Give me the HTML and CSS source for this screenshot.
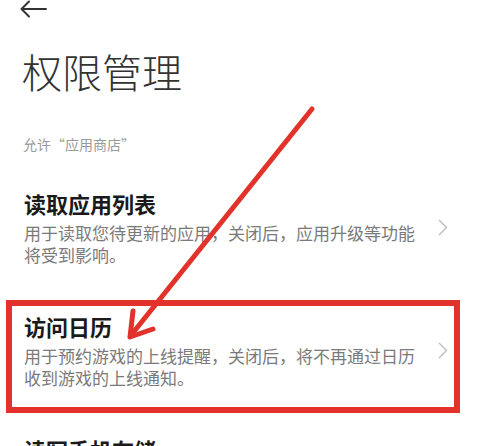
FILE: index.html
```html
<!DOCTYPE html>
<html>
<head>
    <title>权限管理</title>
    <link rel="stylesheet" href="styles.css">
</head>
<body>
    <div class="page">
        <div class="topbar">
            <svg class="back" width="28" height="18" viewBox="0 0 28 18">
                <path d="M27 9H3M10 1.5L2.5 9L10 16.5" fill="none" stroke="#333" stroke-width="2" stroke-linecap="round" stroke-linejoin="round"/>
            </svg>
        </div>

        <h1 class="title">权限管理</h1>
        <div class="section-label">允许“应用商店”</div>

        <div class="list">
            <div class="item">
                <div class="item-text">
                    <div class="item-title">读取应用列表</div>
                    <div class="item-desc">用于读取您待更新的应用，关闭后，应用升级等功能将受到影响。</div>
                </div>
                <svg class="chevron" width="10" height="17" viewBox="0 0 10 17">
                    <path d="M1 1l7.5 7.5L1 16" fill="none" stroke="#bdbdbd" stroke-width="1.4"/>
                </svg>
            </div>

            <div class="item highlight">
                <div class="item-text">
                    <div class="item-title">访问日历</div>
                    <div class="item-desc">用于预约游戏的上线提醒，关闭后，将不再通过日历收到游戏的上线通知。</div>
                </div>
                <svg class="chevron" width="10" height="17" viewBox="0 0 10 17">
                    <path d="M1 1l7.5 7.5L1 16" fill="none" stroke="#bdbdbd" stroke-width="1.4"/>
                </svg>
            </div>

            <div class="item">
                <div class="item-text">
                    <div class="item-title">读写手机存储</div>
                    <div class="item-desc">用于读取和保存下载的安装包，关闭后，将无法下载和安装应用。</div>
                </div>
                <svg class="chevron" width="10" height="17" viewBox="0 0 10 17">
                    <path d="M1 1l7.5 7.5L1 16" fill="none" stroke="#bdbdbd" stroke-width="1.4"/>
                </svg>
            </div>
        </div>

        <!-- annotation arrow drawn over the screenshot -->
        <svg class="pointer" width="491" height="446" viewBox="0 0 491 446">
            <g fill="none" stroke="#e3322b" stroke-width="5" stroke-linecap="round" stroke-linejoin="round">
                <path d="M312 109L132 334"/>
                <path d="M133 311L130 337L153 329"/>
            </g>
        </svg>
    </div>
</body>
</html>
```

FILE: styles.css
```css
html, body {
    margin: 0;
    background-color: #fff;
}

body {
    font-family: "Noto Sans CJK SC", "Noto Sans", sans-serif;
    overflow: hidden;
}

.page {
    position: relative;
    width: 491px;
    height: 446px;
    overflow: hidden;
}

.topbar {
    height: 18px;
    padding-left: 19px;
}

.back {
    display: block;
}

.title {
    margin: 33px 0 0 22px;
    font-size: 40px;
    line-height: 40px;
    font-weight: 300;
    color: #333;
    letter-spacing: 0px;
}

.section-label {
    margin: 46px 0 0 23px;
    font-size: 14px;
    line-height: 14px;
    color: #9a9a9a;
}

.list {
    display: flex;
    flex-direction: column;
    gap: 10px;
    margin-top: 26px;
}

.item {
    display: flex;
    align-items: center;
    margin: 0 31px 0 6px;
    padding: 9px 6px 18px 12px;
    border: 6px solid transparent;
}

.item.highlight {
    border-color: #e3322b;
}

.item-text {
    flex: 1;
}

.item-title {
    font-size: 22px;
    line-height: 22px;
    font-weight: 700;
    color: #1a1a1a;
    margin-bottom: 8px;
}

.item-desc {
    max-width: 400px;
    font-size: 17px;
    line-height: 22px;
    color: #7a7a7a;
}

.chevron {
    flex: none;
    margin-left: 10px;
    margin-bottom: 4px;
}

.pointer {
    position: absolute;
    top: 0;
    left: 0;
    pointer-events: none;
}
```
